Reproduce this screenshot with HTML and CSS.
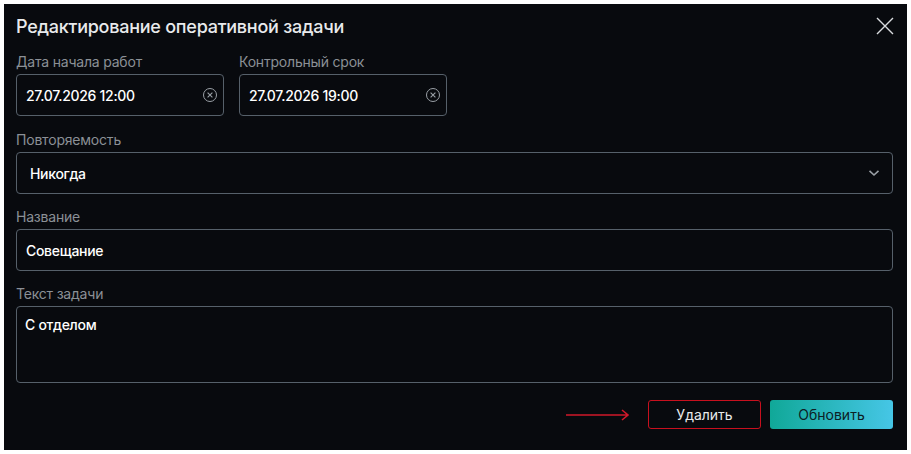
FILE: index.html
```html
<!DOCTYPE html>
<html lang="ru">
<head>
<meta charset="utf-8">
<link rel="stylesheet" href="styles.css">
</head>
<body>
<div class="dialog">
  <div class="head">
    <h1 class="title">Редактирование оперативной задачи</h1>
    <svg class="close" width="18" height="18" viewBox="0 0 18 18"><path d="M1 1L17 17M17 1L1 17" stroke="#d9dcdf" stroke-width="1.4" fill="none"/></svg>
  </div>
  <div class="row">
    <div class="field date">
      <div class="label">Дата начала работ</div>
      <div class="input"><span class="val">27.07.2026 12:00</span>
        <svg class="clear" width="16" height="16" viewBox="0 0 16 16"><circle cx="8" cy="8" r="6.5" stroke="#9aa0a6" stroke-width="1" fill="none"/><path d="M5.6 5.6L10.4 10.4M10.4 5.6L5.6 10.4" stroke="#9aa0a6" stroke-width="1.1" fill="none"/></svg>
      </div>
    </div>
    <div class="field date">
      <div class="label">Контрольный срок</div>
      <div class="input"><span class="val">27.07.2026 19:00</span>
        <svg class="clear" width="16" height="16" viewBox="0 0 16 16"><circle cx="8" cy="8" r="6.5" stroke="#9aa0a6" stroke-width="1" fill="none"/><path d="M5.6 5.6L10.4 10.4M10.4 5.6L5.6 10.4" stroke="#9aa0a6" stroke-width="1.1" fill="none"/></svg>
      </div>
    </div>
  </div>
  <div class="field">
    <div class="label">Повторяемость</div>
    <div class="input select"><span class="val">Никогда</span>
      <svg class="chev" width="12" height="8" viewBox="0 0 12 8"><path d="M1.5 1.8L6 6L10.5 1.8" stroke="#9aa0a6" stroke-width="1.6" fill="none"/></svg>
    </div>
  </div>
  <div class="field">
    <div class="label">Название</div>
    <div class="input"><span class="val">Совещание</span></div>
  </div>
  <div class="field">
    <div class="label">Текст задачи</div>
    <div class="input area"><span class="val">С отделом</span></div>
  </div>
  <div class="actions">
    <svg class="arrow" width="64" height="12" viewBox="0 0 64 12"><path d="M0 6H62M56 1L62 6L56 11" stroke="#d0182a" stroke-width="1.6" fill="none"/></svg>
    <button class="btn del">Удалить</button>
    <button class="btn upd">Обновить</button>
  </div>
</div>
</body>
</html>
```
FILE: styles.css
```css
html, body { margin: 0; padding: 0; }
body {
  background: #ffffff;
  padding: 4px;
  width: 911px;
  height: 454px;
  box-sizing: border-box;
  font-family: Inter, "Noto Sans", sans-serif;
}
.dialog {
  background: #080a0e;
  width: 903px;
  height: 446px;
  box-sizing: border-box;
  padding: 0 14px 0 12px;
  display: flex;
  flex-direction: column;
}
.head {
  display: flex;
  justify-content: space-between;
  align-items: center;
  height: 42px;
  margin-bottom: 7px;
}
.title {
  margin: 0;
  font-size: 18px;
  font-weight: 500;
  color: #e9eaec;
  letter-spacing: -0.25px;
  padding-top: 2px;
}
.close { margin-right: -1px; margin-top: 2px; }
.row {
  display: flex;
  gap: 15px;
}
.field {
  display: flex;
  flex-direction: column;
  margin-bottom: 14px;
}
.field.date { width: 208px; margin-bottom: 15px; }
.label {
  font-size: 14px;
  color: #8b9096;
  line-height: 17px;
  height: 17px;
  margin-bottom: 4px;
  letter-spacing: -0.2px;
}
.input {
  height: 42px;
  box-sizing: border-box;
  border: 1px solid #56606a;
  border-radius: 4px;
  display: flex;
  align-items: center;
  justify-content: space-between;
  padding: 0 5px 0 9px;
}
.val {
  font-size: 14px;
  font-weight: 500;
  color: #ffffff;
  letter-spacing: -0.3px;
}
.select { padding: 0 12px 0 13px; }
.area {
  height: 77px;
  align-items: flex-start;
  padding: 9px 8px 0 8px;
}
.actions {
  display: flex;
  justify-content: flex-end;
  align-items: center;
  margin-top: 3px;
}
.arrow { margin-right: 18px; }
.btn {
  height: 29px;
  box-sizing: border-box;
  border-radius: 3px;
  font-family: Inter, "Noto Sans", sans-serif;
  font-size: 14px;
  padding: 0;
}
.del {
  width: 113px;
  background: #080a0e;
  border: 1px solid #c8101e;
  color: #e9eaec;
  margin-right: 9px;
}
.upd {
  width: 123px;
  border: none;
  background: linear-gradient(90deg, #10a898 0%, #46c6e6 100%);
  color: #0d2024;
}
```
